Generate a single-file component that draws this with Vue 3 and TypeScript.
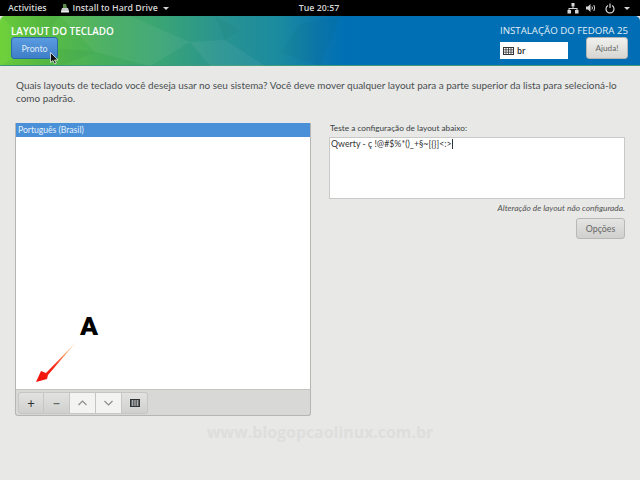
<script setup lang="ts">
const facets: string[] = [
  '0,0 60,0 35,30', '60,0 130,0 95,36', '35,30 95,36 60,50 0,50', '130,0 190,26 150,50 95,36',
  '215,0 240,14 225,24', '190,26 225,24 265,50 210,50', '300,8 340,0 320,50 280,36',
]
</script>

<template>
  <div class="screen">
    <div class="topbar">
      <div class="tb-left">
        <span>Activities</span>
        <span class="app">
          <svg width="10" height="10" viewBox="0 0 10 10"><path d="M1 8h8l-1-3H2z" fill="#c9cdd0"/><path d="M3 5V1h3l1 4z" fill="#5b8a4a"/><rect x="1" y="8" width="8" height="1.5" fill="#eee"/></svg>
          Install to Hard Drive
          <i class="caret"></i>
        </span>
      </div>
      <div class="clock">Tue 20:57</div>
      <div class="tb-right">
        <svg width="12" height="11" viewBox="0 0 12 11" fill="#d8d8d8"><rect x="4.500" y="0" width="3" height="3.500"/><rect x="0.500" y="7" width="3.500" height="3.500"/><rect x="8" y="7" width="3.500" height="3.500"/><path d="M5.500 3.500h1V5h4v2h-1V6h-7v1h-1V5h4z"/></svg>
        <svg width="10" height="10" viewBox="0 0 10 10" fill="none" stroke="#d8d8d8"><path d="M0 3.500h2L4.500 1v8L2 6.500H0z" fill="#d8d8d8" stroke="none"/><path d="M6 3.500q.8 1.500 0 3M7.800 2q1.800 3 0 6"/></svg>
        <svg class="power" width="10" height="11" viewBox="0 0 10 11" fill="none" stroke="#d8d8d8" stroke-width="1.200"><path d="M3 2.500a4 4 0 1 0 4 0M5 0.500v4.500"/></svg>
        <i class="caret"></i>
      </div>
    </div>

    <header class="hero">
      <svg class="facets" width="340" height="50" viewBox="0 0 340 50" aria-hidden="true">
        <polygon v-for="(f, i) in facets" :key="f" :points="f" :fill="i % 2 ? '#ffffff' : '#004d40'" fill-opacity="0.050"/>
      </svg>
      <div class="hero-left">
        <h1>LAYOUT DO TECLADO</h1>
        <button class="done">Pronto</button>
      </div>
      <div class="hero-right">
        <h2>INSTALAÇÃO DO FEDORA 25</h2>
        <div class="hero-controls">
          <div class="kbd-field">
            <svg width="11" height="8" viewBox="0 0 11 8" fill="none" stroke="#333"><rect x="0.500" y="0.500" width="10" height="7"/><path d="M0.500 2.800h10M0.500 5.200h10M3 0.500v7M5.500 0.500v7M8 0.500v7" stroke-width="0.800"/></svg>
            <span>br</span>
          </div>
          <button class="help">Ajuda!</button>
        </div>
      </div>
    </header>

    <main class="content">
      <p class="intro">Quais layouts de teclado você deseja usar no seu sistema? Você deve mover qualquer layout para a parte superior da lista para selecioná-lo<br>como padrão.</p>
      <div class="columns">
        <section class="panel">
          <div class="list">
            <div class="row-selected">Português (Brasil)</div>
          </div>
          <div class="toolbar">
            <div class="group">
              <button class="tool plus">+</button>
              <button class="tool minus">−</button>
              <button class="tool light">
                <svg width="11" height="6" viewBox="0 0 11 6" fill="none" stroke="#8d8d8d" stroke-width="1.200"><path d="M1.500 5l4-4 4 4"/></svg>
              </button>
              <button class="tool light">
                <svg width="11" height="6" viewBox="0 0 11 6" fill="none" stroke="#8d8d8d" stroke-width="1.200"><path d="M1.500 1l4 4 4-4"/></svg>
              </button>
              <button class="tool">
                <svg width="10" height="8" viewBox="0 0 10 8"><rect width="10" height="8" fill="#2e3436"/><path d="M1 2h8M1 4h8M1 6h8M2.500 1v6M5 1v6M7.500 1v6" stroke="#c9c9c9" stroke-width="0.700"/></svg>
              </button>
            </div>
          </div>
        </section>
        <section class="side">
          <label>Teste a configuração de layout abaixo:</label>
          <div class="test-area">Qwerty - ç !@#$%*()_+§~[{}]&lt;:&gt;<i class="text-cursor"></i></div>
          <p class="status">Alteração de layout não configurada.</p>
          <button class="options">Opções</button>
        </section>
      </div>
    </main>

    <div class="mark">A</div>
    <svg class="arrow" width="46" height="44" viewBox="0 0 46 44">
      <defs>
        <linearGradient id="ar" x1="1" y1="0" x2="0" y2="1">
          <stop offset="0" stop-color="#ffffff"/>
          <stop offset="0.300" stop-color="#f9a76a"/>
          <stop offset="0.600" stop-color="#f6281a"/>
          <stop offset="1" stop-color="#f01008"/>
        </linearGradient>
      </defs>
      <path d="M43 0L11 33 6 31 1 42 12 39 13 35z" fill="url(#ar)"/>
    </svg>
    <svg class="pointer" width="9" height="13" viewBox="0 0 9 13"><path d="M0.500 0.500v10l2.500-2 1.500 3.500 1.800-.8L4.500 8H8z" fill="#111" stroke="#fff" stroke-width="0.700"/></svg>
    <div class="watermark">www.blogopcaolinux.com.br</div>
  </div>
</template>

<style scoped>
.screen {
  position: relative;
  width: 640px;
  height: 480px;
  overflow: hidden;
  background: #e8e8e7;
  font-family: Lato, "Open Sans", sans-serif;
  font-size: 8.600px;
  color: #3a3f41;
  display: flex;
  flex-direction: column;
}
.topbar {
  height: 16px;
  background: #000;
  color: #d6d6d6;
  display: grid;
  grid-template-columns: 1fr auto 1fr;
  align-items: center;
  padding: 0 10px 0 8px;
  font-family: "Open Sans", sans-serif;
  font-size: 8.800px;
  font-weight: 600;
  flex: none;
}
.tb-left { display: flex; align-items: center; gap: 13px; }
.app { display: flex; align-items: center; gap: 3px; }
.caret {
  display: inline-block;
  margin-left: 2px;
  border-left: 3px solid transparent;
  border-right: 3px solid transparent;
  border-top: 3px solid #d6d6d6;
}
.tb-right { display: flex; align-items: center; justify-content: flex-end; gap: 7px; }
.tb-right .power { margin-left: 2px; }
.hero {
  position: relative;
  height: 50px;
  flex: none;
  box-sizing: border-box;
  border-radius: 5px 5px 0 0;
  border-bottom: 1px solid #3f9a7c;
  background: linear-gradient(90deg, #6fd23b 0%, #5cc040 6%, #46ad5c 16%, #3aa574 25%, #2a9490 34%, #1a8aa0 44%, #0b76ae 50%, #0070b4 54%, #006db4 100%);
  display: flex;
  justify-content: space-between;
  padding: 8px 12px 0 11px;
  color: #fff;
}
.facets { position: absolute; left: 0; top: 0; }
.hero-left, .hero-right { position: relative; }
.hero h1, .hero h2 { margin: 0; font-family: "Open Sans", sans-serif; font-weight: 600; font-size: 9.900px; line-height: 14px; }
.hero h2 { font-weight: 400; font-size: 9.700px; color: #e3f0f8; text-align: right; }
.done {
  display: block;
  width: 47px;
  height: 22px;
  margin-top: -1px;
  padding: 0;
  border: 1px solid #2b69a8;
  border-radius: 3px;
  background: linear-gradient(#5b9be0, #3d7fc8);
  color: #dbe8f6;
  font: inherit;
  font-size: 8.800px;
}
.hero-controls { display: flex; align-items: flex-end; gap: 18px; margin-top: -1px; }
.kbd-field {
  width: 68px;
  height: 17px;
  box-sizing: border-box;
  background: #fff;
  display: flex;
  align-items: center;
  gap: 3px;
  padding-left: 3px;
  color: #222;
  font-family: "Open Sans", sans-serif;
  font-size: 8px;
  font-weight: 600;
}
.help {
  width: 42px;
  height: 22px;
  padding: 0;
  border: 1px solid #b4b4b2;
  border-radius: 3px;
  background: linear-gradient(#f0f0ee, #d5d5d2);
  color: #666;
  font: inherit;
  font-size: 8.200px;
}
.content { flex: 1; padding: 13px 15px 0; }
.intro {
  margin: 0;
  padding-left: 1px;
  font-size: 9.950px;
  line-height: 13px;
  color: #4a4f51;
  white-space: nowrap;
}
.columns {
  display: grid;
  grid-template-columns: 296px 296px;
  gap: 18px;
  margin-top: 18px;
}
.panel {
  height: 293px;
  box-sizing: border-box;
  border: 1px solid #b5b5b2;
  border-top: 0;
  border-radius: 0 0 3px 3px;
  display: flex;
  flex-direction: column;
  background: #d8d8d6;
}
.list { flex: 1; background: #fff; }
.row-selected {
  height: 14px;
  line-height: 14px;
  background: #4a90d9;
  color: #e6f0fa;
  padding-left: 2px;
  font-size: 8.600px;
}
.toolbar {
  height: 26px;
  flex: none;
  box-sizing: border-box;
  border-top: 1px solid #c4c4c2;
  padding: 2px 0 0 2px;
}
.group { display: flex; }
.tool {
  width: 26px;
  height: 22px;
  padding: 0;
  border: 1px solid #c6c6c4;
  border-left-width: 0;
  background: linear-gradient(#e2e2e0, #d0d0ce);
  display: flex;
  align-items: center;
  justify-content: center;
  font: inherit;
  font-size: 13px;
  line-height: 1;
  color: #2e3436;
}
.group .tool:first-child { border-left-width: 1px; border-radius: 3px 0 0 3px; }
.group .tool:last-child { border-radius: 0 3px 3px 0; }
.minus { color: #666; font-weight: 700; }
.tool.light { background: #f3f3f2; }
.side { display: flex; flex-direction: column; align-items: flex-end; }
.side label { align-self: flex-start; font-size: 8.250px; line-height: 11px; margin-left: 1px; }
.test-area {
  align-self: stretch;
  height: 62px;
  margin-top: 3px;
  box-sizing: border-box;
  background: #fff;
  border: 1px solid #c9c9c7;
  padding: 0 1px;
  font-size: 8.800px;
  line-height: 11px;
  color: #333;
  white-space: nowrap;
}
.text-cursor {
  display: inline-block;
  width: 1px;
  height: 10px;
  background: #333;
  vertical-align: -2px;
}
.status {
  margin: 3px 0 0;
  font-size: 8.400px;
  line-height: 13px;
  font-style: italic;
  color: #555;
}
.options {
  width: 49px;
  height: 21px;
  margin-top: 3px;
  padding: 0;
  border: 1px solid #b8b8b6;
  border-radius: 3px;
  background: linear-gradient(#e4e4e2, #d0d0ce);
  color: #666;
  font: inherit;
  font-size: 8.800px;
}
.mark {
  position: absolute;
  left: 80px;
  top: 311px;
  font-family: Roboto, sans-serif;
  font-weight: 900;
  font-size: 26.500px;
  line-height: 30px;
  color: #000;
}
.arrow { position: absolute; left: 35px; top: 340px; }
.pointer { position: absolute; left: 50px; top: 52px; }
.watermark {
  position: absolute;
  left: 207px;
  top: 422px;
  font-family: "Open Sans", sans-serif;
  font-weight: 700;
  font-size: 15.900px;
  line-height: 20px;
  color: #dededc;
}
</style>
